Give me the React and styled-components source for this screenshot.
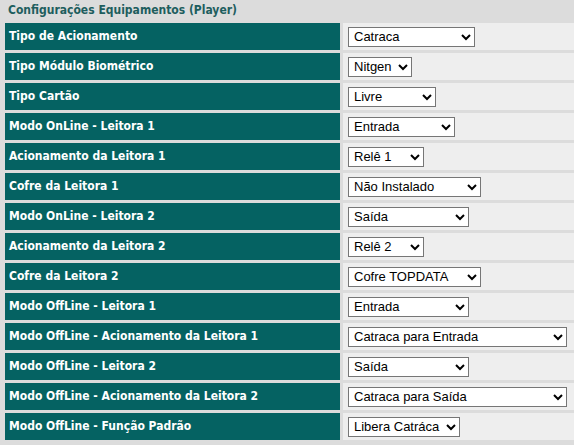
import { Fragment } from "react"
import styled, { createGlobalStyle } from "styled-components"

const GlobalStyle = createGlobalStyle`
  html, body {
    margin: 0;
    padding: 0;
    background: #dcdcdc;
    overflow: hidden;
  }
`

const Panel = styled.div`
  width: 574px;
  height: 445px;
  background: #dcdcdc;
  font-family: "DejaVu Sans Condensed", "DejaVu Sans", Verdana, sans-serif;
`

const Title = styled.div`
  height: 23px;
  padding-left: 8px;
  display: flex;
  align-items: center;
  font-size: 12px;
  font-weight: bold;
  color: #1e5e5e;
  box-sizing: border-box;
  padding-bottom: 3px;
`

const Grid = styled.div`
  display: grid;
  grid-template-columns: 335px 1fr;
  grid-auto-rows: 27px;
  gap: 3px;
  padding-left: 5px;
`

const Label = styled.div`
  background: #056262;
  color: #ffffff;
  font-size: 12px;
  font-weight: bold;
  display: flex;
  align-items: center;
  padding-left: 4px;
  padding-bottom: 1px;
  box-sizing: border-box;
`

const Value = styled.div`
  background: #eeeeee;
  display: flex;
  align-items: center;
  padding-left: 5px;
`

const Select = styled.select`
  width: ${(p) => p.$w}px;
  height: 20px;
  font-family: "Liberation Sans", Arial, sans-serif;
  font-size: 13px;
  color: #000;
  background: #fff;
  border: 1px solid #767676;
  border-radius: 0;
  padding: 0 0 0 1px;
  margin: 0;
`

const rows = [
  ["Tipo de Acionamento", "Catraca", 127],
  ["Tipo Módulo Biométrico", "Nitgen", 64],
  ["Tipo Cartão", "Livre", 88],
  ["Modo OnLine - Leitora 1", "Entrada", 107],
  ["Acionamento da Leitora 1", "Relê 1", 76],
  ["Cofre da Leitora 1", "Não Instalado", 133],
  ["Modo OnLine - Leitora 2", "Saída", 121],
  ["Acionamento da Leitora 2", "Relê 2", 76],
  ["Cofre da Leitora 2", "Cofre TOPDATA", 133],
  ["Modo OffLine - Leitora 1", "Entrada", 121],
  ["Modo OffLine - Acionamento da Leitora 1", "Catraca para Entrada", 219],
  ["Modo OffLine - Leitora 2", "Saída", 121],
  ["Modo OffLine - Acionamento da Leitora 2", "Catraca para Saída", 219],
  ["Modo OffLine - Função Padrão", "Libera Catráca", 112],
]

export default function App() {
  return (
    <Panel>
      <GlobalStyle />
      <Title>Configurações Equipamentos (Player)</Title>
      <Grid>
        {rows.map(([label, value, w]) => (
          <Fragment key={label}>
            <Label>{label}</Label>
            <Value>
              <Select $w={w} defaultValue={value}>
                <option>{value}</option>
              </Select>
            </Value>
          </Fragment>
        ))}
      </Grid>
    </Panel>
  )
}
